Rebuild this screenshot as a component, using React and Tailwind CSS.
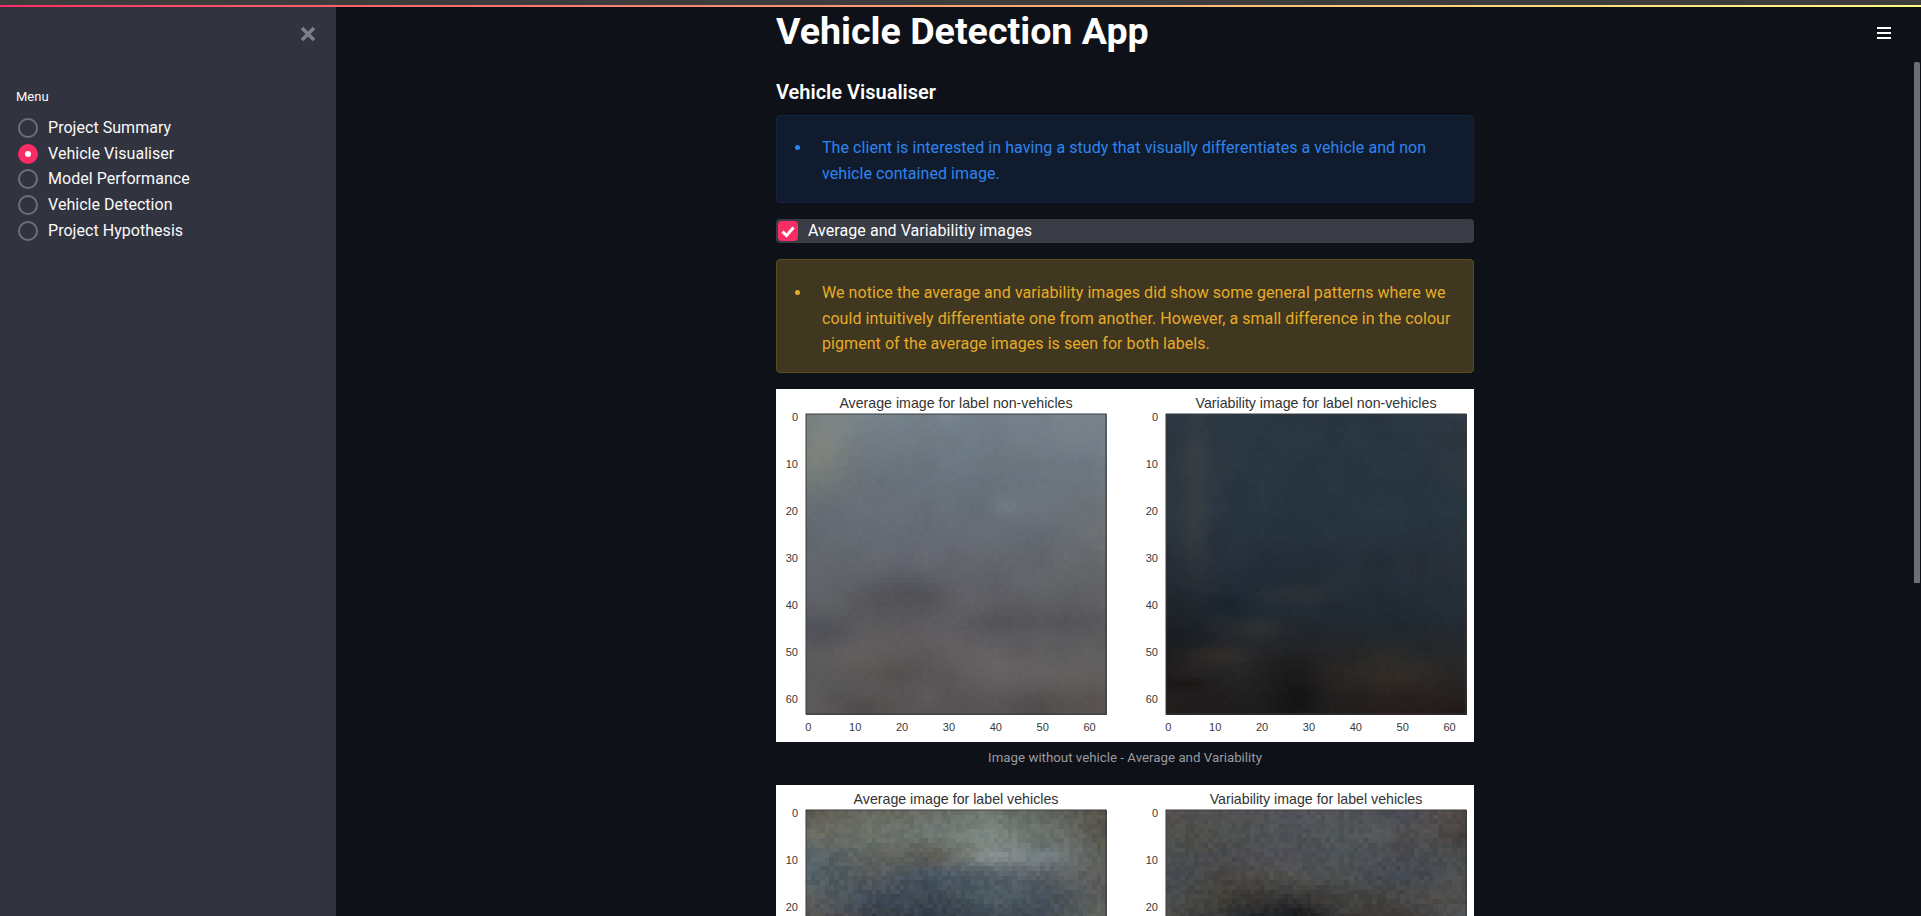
import { useMemo } from "react";

const menuItems = ["Project Summary", "Vehicle Visualiser", "Model Performance", "Vehicle Detection", "Project Hypothesis"];
const ticks = [0, 10, 20, 30, 40, 50, 60];
const CELL = 300 / 64;

// coarse colour maps, blown up to 64 x 64 with a bit of noise
const avgNon = [
    ["768082", "76828a", "74808a", "74808a", "78828c"],
    ["787e78", "6a747e", "6a7680", "6e7882", "707a84"],
    ["646c74", "666c76", "666e78", "68707a", "6c7276"],
    ["62666c", "62666e", "64666e", "62666c", "66686c"],
    ["5e6064", "5e5c60", "605f64", "5e5e62", "606064"],
    ["58585c", "625e5e", "605c5e", "5c5a5c", "5e5c5c"],
    ["5a5858", "585454", "585656", "585454", "5c5654"],
];
const varNon = [
    ["2a3640", "2a3842", "2a3640", "2a3640", "2c3842"],
    ["2c3640", "2a3640", "283640", "283640", "2c3640"],
    ["2c3640", "263440", "263440", "263440", "283640"],
    ["262e38", "242e3a", "242e38", "262e38", "28303a"],
    ["22262c", "202a34", "222a32", "1e2a34", "242c34"],
    ["201e20", "262628", "222224", "262626", "242628"],
    ["221c1c", "1e1c1c", "1c1a1a", "261e1c", "201a18"],
];
const avgVeh = [
    ["5e5a52", "6a6c62", "6a6e66", "6c746c", "646862", "5a564e"],
    ["68685e", "6a7068", "6c7670", "7a847e", "707870", "56544e"],
    ["586468", "5e6460", "605f58", "7c8482", "7c868a", "5a5e58"],
    ["506068", "54585a", "485664", "505c64", "586066", "5c5c58"],
    ["5a5e5c", "404c58", "3e4852", "4c5a62", "424e58", "5a5c5a"],
    ["5a5654", "3c3f48", "323c48", "404a54", "3e464e", "62655e"],
];
const varVeh = [
    ["544e4e", "4e4e50", "505058", "525558", "4c4c56", "504844"],
    ["4e4e48", "4c504c", "505558", "505658", "585b5e", "443c38"],
    ["4a4e4e", "4c4c50", "4e4e56", "4a5054", "4e5056", "484c4c"],
    ["484e56", "4a4640", "50504c", "4a4e50", "40444e", "4e5050"],
    ["4c5050", "3e3c36", "343232", "40403c", "4a4a48", "4e4c4c"],
    ["4e4a48", "303234", "1e2024", "3c3a38", "403c3a", "505458"],
];

// soft blotches on top of the colour maps: cx, cy, rx, ry, brightness, warmth
const avgNonSpots = [
    [22, 38, 7, 3, -14, 0],
    [22, 54, 7, 3, -12, 0],
    [3, 46, 5, 3, -10, -2],
    [50, 44, 13, 2, -9, 0],
    [42, 19, 2, 1.5, 8, 0],
    [8, 51, 8, 3, 6, 2],
    [42, 54, 14, 3, 6, 1],
    [4, 5, 3, 4, 8, 4],
    [12, 62, 4, 2, -8, 0],
    [48, 62, 10, 2, -6, 0],
];
const varNonSpots = [
    [6, 10, 2, 8, 5, 4],
    [6, 26, 2, 8, 5, 4],
    [10, 51, 5, 1.5, 8, 6],
    [18, 45, 5, 1.5, 6, 5],
    [28, 38, 6, 1.5, 5, 3],
    [10, 40, 5, 2, -6, 0],
    [4, 47, 4, 3, -8, -2],
    [25, 53, 4, 3, -7, 0],
    [27, 60, 3, 3, -8, 0],
    [48, 55, 12, 3, 6, 4],
    [4, 57, 4, 1, -8, 2],
];
const avgVehSpots = [
    [62, 6, 4, 2, 0, 0],
    [50, 7, 2, 1.5, -14, 0],
    [38, 10, 4, 1, 12, 0],
    [27, 9, 4, 1, -6, 0],
];
const varVehSpots = [
    [50, 6, 2, 2, -14, 2],
    [28, 22, 4, 2, -10, 0],
];

const toRgb = (hex) => [0, 2, 4].map((i) => parseInt(hex.slice(i, i + 2), 16));

const hash = (x, y, seed) => {
    const s = Math.sin(x * 127.1 + y * 311.7 + seed * 74.7) * 43758.5453;
    return s - Math.floor(s);
};

// smooth noise, for the slow blotchy variation
const smoothNoise = (x, y, seed, size) => {
    const gx = x / size;
    const gy = y / size;
    const x0 = Math.floor(gx);
    const y0 = Math.floor(gy);
    const fx = gx - x0;
    const fy = gy - y0;
    return (
        hash(x0, y0, seed) * (1 - fx) * (1 - fy) +
        hash(x0 + 1, y0, seed) * fx * (1 - fy) +
        hash(x0, y0 + 1, seed) * (1 - fx) * fy +
        hash(x0 + 1, y0 + 1, seed) * fx * fy
    );
};

const sample = (grid, u, v) => {
    const gy = v * (grid.length - 1);
    const gx = u * (grid[0].length - 1);
    const y0 = Math.min(Math.floor(gy), grid.length - 2);
    const x0 = Math.min(Math.floor(gx), grid[0].length - 2);
    const fy = gy - y0;
    const fx = gx - x0;
    const a = toRgb(grid[y0][x0]);
    const b = toRgb(grid[y0][x0 + 1]);
    const c = toRgb(grid[y0 + 1][x0]);
    const d = toRgb(grid[y0 + 1][x0 + 1]);
    return a.map((_, i) => a[i] * (1 - fx) * (1 - fy) + b[i] * fx * (1 - fy) + c[i] * (1 - fx) * fy + d[i] * fx * fy);
};

const Heatmap = ({ grid, rows, seed, noise, blotch, spots }) => {
    const cells = useMemo(() => {
        const out = [];
        for (let y = 0; y < rows; y++) {
            for (let x = 0; x < 64; x++) {
                const col = sample(grid, x / 63, y / (rows - 1));
                let n = (hash(x, y, seed) - 0.5) * noise + (smoothNoise(x, y, seed + 5, 5) - 0.5) * blotch;
                let warm = (hash(x, y, seed + 9) - 0.5) * noise * 0.35;
                spots.forEach(([cx, cy, rx, ry, d, w]) => {
                    const g = Math.exp(-((x - cx) ** 2) / (2 * rx * rx) - (y - cy) ** 2 / (2 * ry * ry));
                    n += d * g;
                    warm += w * g;
                });
                const fill = `rgb(${Math.round(col[0] + n + warm)},${Math.round(col[1] + n)},${Math.round(col[2] + n - warm)})`;
                out.push(<rect key={`${x}-${y}`} x={x * CELL} y={y * CELL} width={CELL + 0.5} height={CELL + 0.5} fill={fill} />);
            }
        }
        return out;
    }, [grid, rows, seed, noise, blotch, spots]);

    return <g shapeRendering="crispEdges">{cells}</g>;
};

const Axes = ({ x, title, ...map }) => (
    <g transform={`translate(${x} 25)`}>
        <text x="150" y="-6" textAnchor="middle" className="fill-[#333333] text-[14.2px]">
            {title}
        </text>
        <Heatmap {...map} />
        <rect x="0" y="0" width="300" height="300" fill="none" stroke="#3a3a3a" strokeWidth="1" />
        {ticks.map((t) => (
            <g key={t} className="fill-[#3a3a3a] text-[11px]">
                <text x="-8" y={(t + 0.5) * CELL + 5} textAnchor="end">
                    {t}
                </text>
                <text x={(t + 0.5) * CELL} y="317" textAnchor="middle">
                    {t}
                </text>
            </g>
        ))}
    </g>
);

const Figure = ({ left, right }) => (
    <svg width="698" height="353" viewBox="0 0 698 353" className="block shrink-0 bg-white font-['Liberation_Sans',Arial,sans-serif]">
        <Axes x={30} {...left} />
        <Axes x={390} {...right} />
    </svg>
);

const Callout = ({ box, dot, children }) => (
    <div className={`mt-4 flex rounded-[4px] border pl-[18px] pr-4 text-[16px] leading-[25.6px] tracking-[0.06px] ${box}`}>
        <span className={`mt-[10px] h-[5px] w-[5px] shrink-0 rounded-full ${dot}`} />
        <p className="ml-[22px]">{children}</p>
    </div>
);

export default function App() {
    return (
        <div className="flex h-screen w-full flex-col overflow-hidden bg-[#0e1117] font-['Roboto',sans-serif] text-white">
            <div className="h-[5px] shrink-0 bg-[#3c3c3c]" />
            <div className="h-[2px] shrink-0 bg-linear-to-r from-[#f92c65] to-[#fffd80]" />
            <div className="flex min-h-0 flex-1">
                <aside className="w-[336px] shrink-0 bg-[#31333f] pl-4">
                    <div className="flex justify-end pt-[20px] pr-[21px]">
                        <svg width="14" height="14" viewBox="0 0 14 14" stroke="#7d7e86" strokeWidth="3.6">
                            <path d="M1 1 13 13M13 1 1 13" />
                        </svg>
                    </div>
                    <p className="mt-[46px] text-[13px] leading-[20px] text-[#fafafa]">Menu</p>
                    <ul className="mt-[8px]">
                        {menuItems.map((item, i) => (
                            <li key={item} className="flex h-[25.8px] items-center text-[16px] tracking-[0.04px] text-[#fafafa]">
                                {i === 1 ? (
                                    <span className="ml-[2px] flex h-5 w-5 items-center justify-center rounded-full bg-[#f92c65]">
                                        <span className="h-[6px] w-[6px] rounded-full bg-white" />
                                    </span>
                                ) : (
                                    <span className="ml-[2px] h-5 w-5 rounded-full border-2 border-[#6e7079]" />
                                )}
                                <span className="ml-[10px]">{item}</span>
                            </li>
                        ))}
                    </ul>
                </aside>

                <main className="relative flex min-w-0 flex-1 justify-center">
                    <div className="w-[698px] shrink-0">
                        <h1 className="h-[45px] pt-[2px] text-[37.6px] font-bold leading-[45px]">Vehicle Detection App</h1>
                        <h2 className="mt-[26px] text-[20px] font-semibold leading-[28px]">Vehicle Visualiser</h2>
                        <div className="-mt-[7px]">
                            <Callout box="border-[#14263f] bg-[#101c2d] pt-[19px] pb-[16px] text-[#2e84ee]" dot="bg-[#2e84ee]">
                                The client is interested in having a study that visually differentiates a vehicle and non vehicle contained image.
                            </Callout>
                        </div>
                        <label className="mt-4 flex h-6 items-center rounded-[4px] bg-[#3a3c46] text-[16px] tracking-[0.06px]">
                            <span className="ml-[2px] flex h-5 w-5 items-center justify-center rounded-[4px] bg-[#f92c65]">
                                <svg width="16" height="16" viewBox="0 0 16 16" fill="none" stroke="white" strokeWidth="3">
                                    <path d="M2.5 8.5 6.5 12.5 13.5 4.5" />
                                </svg>
                            </span>
                            <span className="ml-[10px]">Average and Variabilitiy images</span>
                        </label>
                        <Callout box="border-[#5b4d22] bg-[#3f3720] pt-[20px] pb-[15px] text-[#e8ab28]" dot="bg-[#e8ab28]">
                            We notice the average and variability images did show some general patterns where we could intuitively differentiate one from another. However, a small difference in the colour pigment of the average images is seen for both labels.
                        </Callout>
                        <div className="mt-4">
                            <Figure
                                left={{ title: "Average image for label non-vehicles", grid: avgNon, rows: 64, seed: 1, noise: 2.5, blotch: 7, spots: avgNonSpots }}
                                right={{ title: "Variability image for label non-vehicles", grid: varNon, rows: 64, seed: 2, noise: 2, blotch: 5, spots: varNonSpots }}
                            />
                        </div>
                        <p className="flex h-8 items-center justify-center text-[13.3px] text-[#9a9ba1]">Image without vehicle - Average and Variability</p>
                        <div className="mt-[11px]">
                            <Figure
                                left={{ title: "Average image for label vehicles", grid: avgVeh, rows: 24, seed: 3, noise: 14, blotch: 8, spots: avgVehSpots }}
                                right={{ title: "Variability image for label vehicles", grid: varVeh, rows: 24, seed: 4, noise: 12, blotch: 6, spots: varVehSpots }}
                            />
                        </div>
                    </div>
                    <svg width="14" height="12" viewBox="0 0 14 12" fill="white" className="absolute top-[20px] right-[23px]">
                        <rect y="0" width="14" height="2" />
                        <rect y="5" width="14" height="2" />
                        <rect y="10" width="14" height="2" />
                    </svg>
                </main>

                <div className="w-[7px] shrink-0">
                    <div className="mt-[55px] h-[521px] w-[6px] rounded-t-[2px] bg-[#6e6f73]" />
                </div>
            </div>
        </div>
    );
}
